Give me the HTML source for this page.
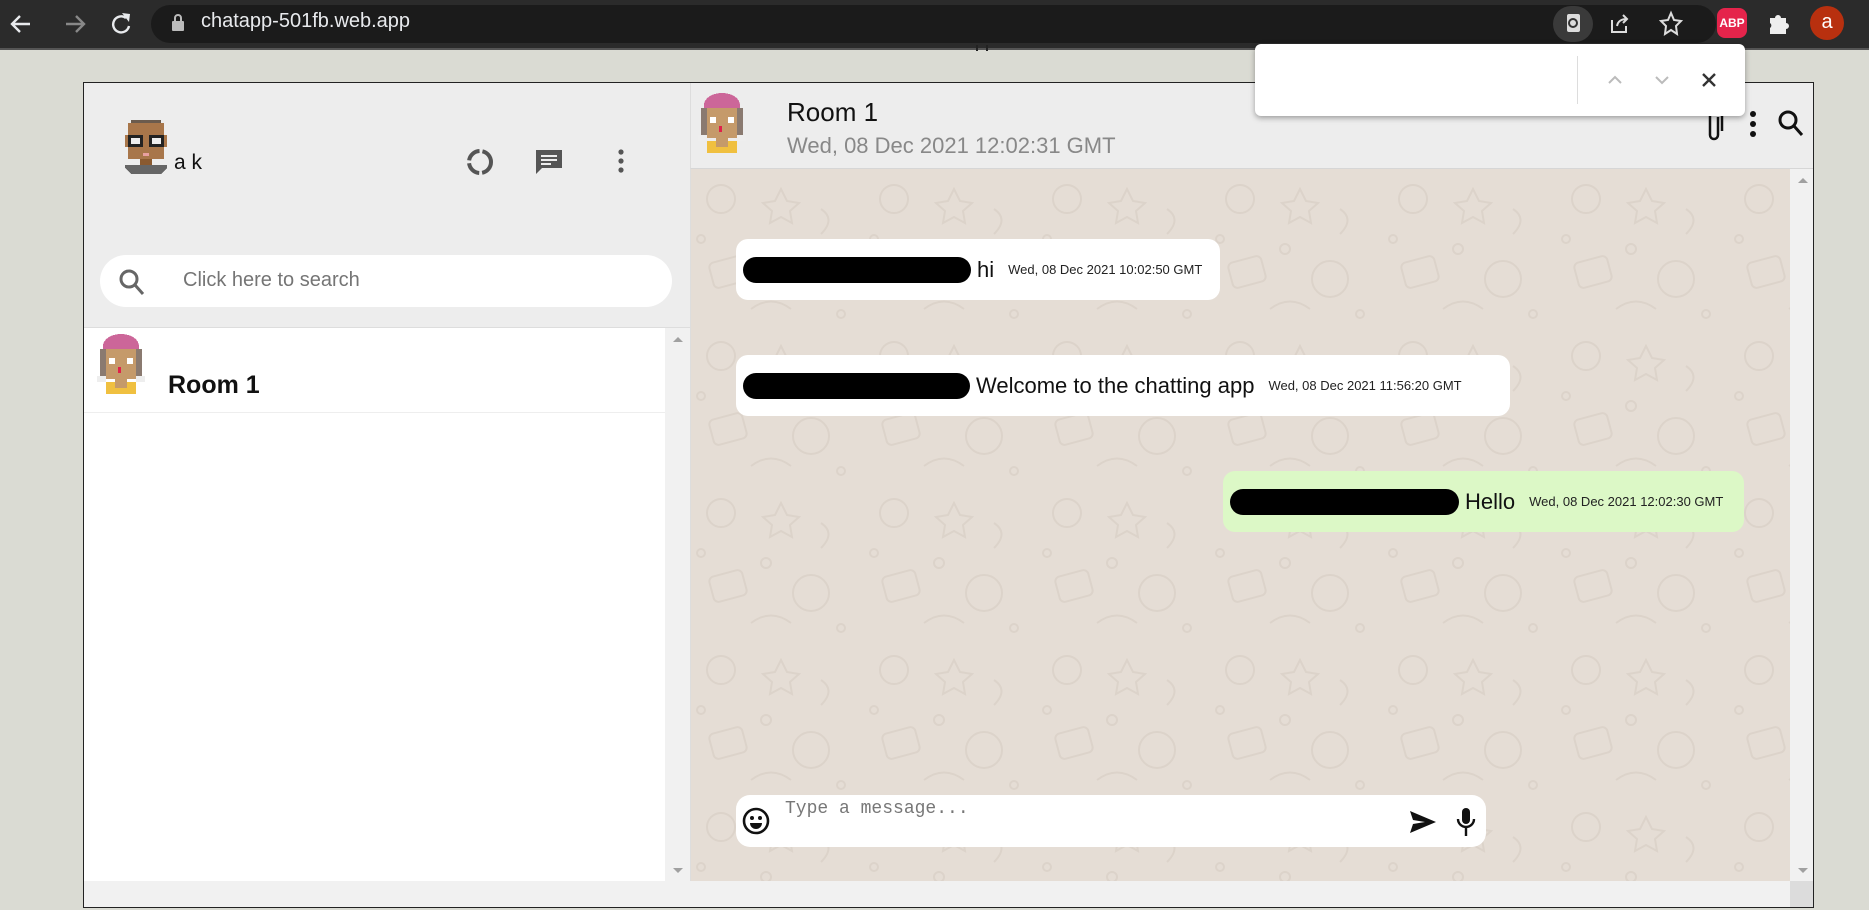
<!DOCTYPE html>
<html><head><meta charset="utf-8">
<style>
*{box-sizing:border-box;margin:0;padding:0}
body{width:1869px;height:910px;overflow:hidden;background:#dadbd3;font-family:"Liberation Sans",sans-serif;position:relative}
.abs{position:absolute}
#tb{left:0;top:0;width:1869px;height:50px;background:#2b2b2b;border-bottom:2px solid #555}
#omni{left:151px;top:5px;width:1565px;height:38px;border-radius:19px;background:#1b1b1b}
#url{left:201px;top:10px;color:#e8eaed;font-size:20px}
#app{left:83px;top:82px;width:1731px;height:826px;border:1px solid #222;background:#fff;overflow:hidden}
#sh{left:0;top:0;width:606px;height:245px;background:#ededed;border-bottom:1px solid #ddd}
#search{left:16px;top:172px;width:572px;height:52px;border-radius:26px;background:#fff}
#list{left:0;top:245px;width:581px;height:553px;background:#fff}
#row{left:0;top:0;width:581px;height:85px;border-bottom:1px solid #eee}
.vs{background:#f1f1f1}
#ch{left:606px;top:0;width:1125px;height:86px;background:#ededed;border-bottom:1px solid #d6d6d6;border-left:1px solid #ddd}
#body{left:606px;top:86px;width:1100px;height:712px;background:#e5ddd5;border-left:1px solid #ddd}
.bub{position:absolute;background:#fff;border-radius:12px;height:61px;display:flex;align-items:center;padding-left:7px;font-size:22px;color:#111}
.scr{height:26px;background:#000;border-radius:13px;margin-right:6px}
.tm{font-size:13px;margin-left:14px;color:#222}
#find{left:1255px;top:44px;width:490px;height:72px;background:#fff;border-radius:6px;box-shadow:0 2px 6px rgba(0,0,0,.35)}
</style></head><body>
<div id="tb" class="abs"></div>
<svg class="abs" style="left:8px;top:10px" width="130" height="28" viewBox="0 0 130 28">
<path d="M22 14H5M12 6l-8 8 8 8" stroke="#e8eaed" stroke-width="2.4" fill="none"/>
<path d="M58 14h17M68 6l8 8-8 8" stroke="#888" stroke-width="2.4" fill="none"/>
<path d="M118 8a8 8 0 1 0 3 8" stroke="#e8eaed" stroke-width="2.4" fill="none"/><path d="M114 3l8 1-1 8z" fill="#e8eaed"/>
</svg>
<div id="omni" class="abs"></div>
<svg class="abs" style="left:171px;top:14px" width="14" height="18"><rect x="1" y="7" width="12" height="10" rx="1" fill="#bbb"/><path d="M4 7V4a3 3 0 0 1 6 0v3" stroke="#bbb" stroke-width="2" fill="none"/></svg>
<div id="url" class="abs">chatapp-501fb.web.app</div>
<div class="abs" style="left:1553px;top:6px;width:40px;height:36px;border-radius:18px;background:#3a3a3a"></div>
<svg class="abs" style="left:1560px;top:10px" width="130" height="28">
<rect x="7" y="4" width="13" height="18" rx="2" fill="#ddd"/><circle cx="13" cy="13" r="4" stroke="#333" stroke-width="2" fill="none"/>
<path d="M52 10v12h14v-6M57 16c1-5 4-7 10-7M63 5l4 4-4 4" stroke="#ddd" stroke-width="2" fill="none"/>
<path d="M111 3l3 7 7 1-5 5 1 8-6-4-6 4 1-8-5-5 7-1z" stroke="#ddd" stroke-width="2" fill="none"/>
</svg>
<div class="abs" style="left:1717px;top:8px;width:30px;height:30px;background:#e5244b;border-radius:8px;color:#fff;font-size:12px;font-weight:bold;text-align:center;line-height:30px">ABP</div>
<svg class="abs" style="left:1766px;top:10px" width="26" height="26"><path d="M4 8h5a3 3 0 0 1 6 0h5v5a3 3 0 0 1 0 6v5H4v-6a3 3 0 0 0 0-5z" fill="#eee"/></svg>
<div class="abs" style="left:1810px;top:6px;width:34px;height:34px;border-radius:17px;background:#b8300f;color:#fff;font-size:20px;text-align:center;line-height:32px">a</div>
<div class="abs" style="left:976px;top:45px;width:12px;height:6px;border-left:2px solid #222;border-right:2px solid #222"></div>

<div id="app" class="abs">
 <div id="sh" class="abs">
  <svg class="abs" style="left:38px;top:36px" width="48" height="56" viewBox="0 0 16 18" shape-rendering="crispEdges">
   <rect x="3" y="0" width="10" height="2" fill="#6b5b4d"/><rect x="2" y="1" width="12" height="12" fill="#a8764a"/><rect x="1" y="5" width="14" height="4" fill="#a8764a"/>
   <rect x="2" y="5" width="5" height="4" fill="#222"/><rect x="9" y="5" width="5" height="4" fill="#222"/><rect x="3" y="6" width="3" height="2" fill="#eee"/><rect x="10" y="6" width="3" height="2" fill="#eee"/>
   <rect x="7" y="11" width="2" height="1" fill="#e8a0a0"/><rect x="6" y="13" width="4" height="2" fill="#8a5a30"/>
   <path d="M1 15h14v1l-2 2H3l-2-2z" fill="#666"/></svg>
  <div class="abs" style="left:90px;top:68px;font-size:21px;color:#111">a k</div>
  <svg class="abs" style="left:380px;top:64px" width="160" height="32">
   <circle cx="16" cy="15" r="11" stroke="#555" stroke-width="4" fill="none" stroke-dasharray="15 3"/>
   <path d="M72 3h26v18H78l-6 6z" fill="#555"/><path d="M77 9h16M77 13h16M77 17h10" stroke="#ededed" stroke-width="2"/>
   <circle cx="157" cy="5" r="2.6" fill="#555"/><circle cx="157" cy="14" r="2.6" fill="#555"/><circle cx="157" cy="23" r="2.6" fill="#555"/>
  </svg>
  <div id="search" class="abs">
   <svg class="abs" style="left:18px;top:13px" width="28" height="30"><circle cx="11" cy="11" r="8" stroke="#666" stroke-width="3" fill="none"/><path d="M17 17l8 9" stroke="#666" stroke-width="3"/></svg>
   <div class="abs" style="left:83px;top:14px;font-size:20px;color:#757575">Click here to search</div>
  </div>
 </div>
 <div id="list" class="abs">
  <div id="row" class="abs">
   <svg class="abs" style="left:10px;top:6px" width="54" height="60" viewBox="0 0 18 20" shape-rendering="crispEdges">
    <path d="M3 4a6 4 0 0 1 12 0v1H3z" fill="#cc6699"/><rect x="3" y="5" width="12" height="10" fill="#c59a6a"/><rect x="2" y="5" width="2" height="10" fill="#8a7a70"/><rect x="14" y="5" width="2" height="10" fill="#8a7a70"/>
    <rect x="5" y="8" width="2" height="2" fill="#fff"/><rect x="11" y="8" width="2" height="2" fill="#fff"/><rect x="8" y="11" width="1" height="2" fill="#e0204a"/>
    <rect x="1" y="14" width="3" height="2" fill="#eee"/><rect x="14" y="14" width="3" height="2" fill="#eee"/><rect x="4" y="16" width="10" height="4" fill="#f0c040"/><rect x="7" y="15" width="4" height="3" fill="#c59a6a"/></svg>
   <div class="abs" style="left:84px;top:43px;font-size:25px;font-weight:bold;color:#111">Room 1</div>
  </div>
 </div>
 <div class="abs vs" style="left:581px;top:245px;width:25px;height:553px"><div style="margin:9px auto;width:0;height:0;border:5px solid transparent;border-bottom-color:#a0a0a0;border-top:0"></div><div style="position:absolute;bottom:8px;left:8px;border:5px solid transparent;border-top-color:#a0a0a0;border-bottom:0"></div></div>
 <div class="abs vs" style="left:0;top:798px;width:606px;height:27px"></div>
 <div id="ch" class="abs">
  <svg class="abs" style="left:4px;top:10px" width="54" height="60" viewBox="0 0 18 20" shape-rendering="crispEdges">
    <path d="M3 4a6 4 0 0 1 12 0v1H3z" fill="#cc6699"/><rect x="3" y="5" width="12" height="10" fill="#c59a6a"/><rect x="2" y="5" width="2" height="10" fill="#8a7a70"/><rect x="14" y="5" width="2" height="10" fill="#8a7a70"/>
    <rect x="5" y="8" width="2" height="2" fill="#fff"/><rect x="11" y="8" width="2" height="2" fill="#fff"/><rect x="8" y="11" width="1" height="2" fill="#e0204a"/>
    <rect x="1" y="14" width="3" height="2" fill="#eee"/><rect x="14" y="14" width="3" height="2" fill="#eee"/><rect x="4" y="16" width="10" height="4" fill="#f0c040"/><rect x="7" y="15" width="4" height="3" fill="#c59a6a"/></svg>
  <div class="abs" style="left:96px;top:14px;font-size:26px;color:#111">Room 1</div>
  <div class="abs" style="left:96px;top:50px;font-size:22px;color:#888">Wed, 08 Dec 2021 12:02:31 GMT</div>
  <svg class="abs" style="left:1015px;top:26px" width="110" height="32">
   <path d="M12 8v18a4 4 0 0 1-8 0V6a6 6 0 0 1 12 0v16" stroke="#111" stroke-width="2.5" fill="none"/>
   <circle cx="47" cy="5" r="3" fill="#111"/><circle cx="47" cy="15" r="3" fill="#111"/><circle cx="47" cy="25" r="3" fill="#111"/>
   <circle cx="82" cy="11" r="8" stroke="#111" stroke-width="3" fill="none"/><path d="M88 17l8 9" stroke="#111" stroke-width="3"/>
  </svg>
 </div>
 <div id="body" class="abs">
  <svg class="abs" style="left:0;top:0" width="1100" height="712">
   <defs><pattern id="p" width="173" height="157" patternUnits="userSpaceOnUse">
    <g stroke="#dcd3ca" stroke-width="2" fill="none">
     <circle cx="30" cy="30" r="14"/><path d="M90 20l6 12 12 2-9 8 2 12-11-6-11 6 2-12-9-8 12-2z"/>
     <rect x="20" y="90" width="34" height="26" rx="5" transform="rotate(-15 37 103)"/><circle cx="120" cy="110" r="18"/><circle cx="75" cy="80" r="5"/>
     <path d="M130 40q15 10 0 25M60 140q20-15 40 0"/><circle cx="150" cy="145" r="4"/><circle cx="10" cy="70" r="4"/>
    </g></pattern></defs>
   <rect width="1100" height="712" fill="url(#p)"/>
  </svg>
  <div class="bub" style="left:45px;top:70px;width:484px"><div class="scr" style="width:228px"></div>hi<span class="tm">Wed, 08 Dec 2021 10:02:50 GMT</span></div>
  <div class="bub" style="left:45px;top:186px;width:774px"><div class="scr" style="width:227px"></div>Welcome to the chatting app<span class="tm">Wed, 08 Dec 2021 11:56:20 GMT</span></div>
  <div class="bub" style="left:532px;top:302px;width:521px;background:#dcf8c6"><div class="scr" style="width:229px"></div>Hello<span class="tm">Wed, 08 Dec 2021 12:02:30 GMT</span></div>
  <div class="abs" style="left:45px;top:626px;width:750px;height:52px;border-radius:14px;background:#fff">
   <svg class="abs" style="left:4px;top:10px" width="32" height="32"><circle cx="16" cy="16" r="12" stroke="#111" stroke-width="2.6" fill="none"/><circle cx="12" cy="13" r="2" fill="#111"/><circle cx="20" cy="13" r="2" fill="#111"/><path d="M10 18h12a6 6 0 0 1-12 0z" fill="#111"/></svg>
   <div class="abs" style="left:49px;top:4px;font-family:'Liberation Mono',monospace;font-size:18px;color:#777">Type a message...</div>
   <svg class="abs" style="left:672px;top:12px" width="72" height="30"><path d="M2 4l26 11L2 26l3-9 12-2-12-2z" fill="#111"/><rect x="54" y="1" width="8" height="16" rx="4" fill="#111"/><path d="M50 12a8 8 0 0 0 16 0M58 20v9" stroke="#111" stroke-width="2.4" fill="none"/></svg>
  </div>
 </div>
 <div class="abs vs" style="left:1706px;top:86px;width:25px;height:712px"><div style="margin:9px auto;width:0;height:0;border:5px solid transparent;border-bottom-color:#a0a0a0;border-top:0"></div><div style="position:absolute;bottom:8px;left:8px;border:5px solid transparent;border-top-color:#a0a0a0;border-bottom:0"></div></div>
 <div class="abs vs" style="left:606px;top:798px;width:1100px;height:27px"></div>
 <div class="abs" style="left:1706px;top:798px;width:25px;height:27px;background:#dcdcdc"></div>
</div>

<div id="find" class="abs">
 <div class="abs" style="left:322px;top:12px;width:1px;height:48px;background:#ddd"></div>
 <svg class="abs" style="left:350px;top:24px" width="130" height="24">
  <path d="M4 15l6-6 6 6" stroke="#bbb" stroke-width="2" fill="none"/><path d="M51 9l6 6 6-6" stroke="#bbb" stroke-width="2" fill="none"/>
  <path d="M98 6l12 12M110 6L98 18" stroke="#333" stroke-width="2.4"/>
 </svg>
</div>
</body></html>
